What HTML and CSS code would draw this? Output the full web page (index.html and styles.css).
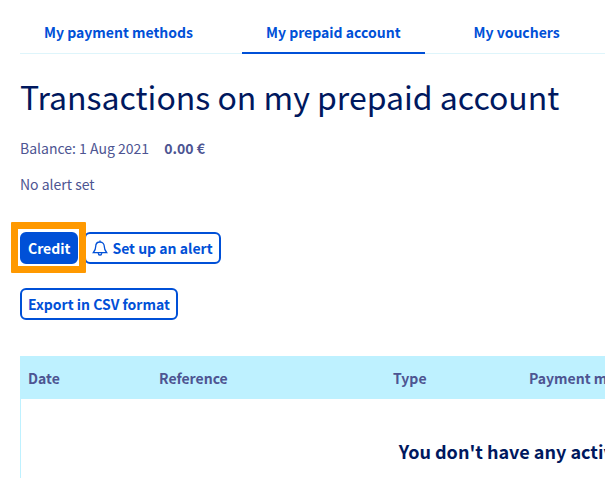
FILE: index.html
```html
<!DOCTYPE html>
<html lang="en">
<head>
<meta charset="utf-8">
<meta name="viewport" content="width=device-width, initial-scale=1">
<title>My prepaid account</title>
<link rel="stylesheet" href="styles.css">
</head>
<body>
<main class="page">
  <nav class="tabs" aria-label="Payment">
    <a class="tab" href="#methods">My payment methods</a>
    <a class="tab tab-active" href="#prepaid" aria-current="page">My prepaid account</a>
    <a class="tab" href="#vouchers">My vouchers</a>
  </nav>
  <h1 class="title">Transactions on my prepaid account</h1>
  <p class="info">Balance: 1 Aug 2021 <strong class="amount">0.00 €</strong></p>
  <p class="info">No alert set</p>
  <div class="actions">
    <span class="highlight"><button class="button button-primary" type="button">Credit</button></span>
    <button class="button" type="button">
      <svg class="bell" viewBox="0 0 16 16" aria-hidden="true">
        <path d="M8 .6V2M8 2C5.3 2 3.7 4 3.7 6.5C3.7 9.6 2.8 10.9 1.3 12.7H14.7C13.2 10.9 12.3 9.6 12.3 6.5C12.3 4 10.7 2 8 2Z"/>
        <path d="M6.2 13.2C6.4 14.6 7.1 15.2 8 15.2S9.6 14.6 9.8 13.2"/>
      </svg>
      Set up an alert
    </button>
  </div>
  <div class="actions">
    <button class="button" type="button">Export in CSV format</button>
  </div>
  <div class="table-wrap">
    <table class="table">
      <colgroup><col class="col-date"><col class="col-reference"><col class="col-type"><col></colgroup>
      <thead>
        <tr><th>Date</th><th>Reference</th><th>Type</th><th>Payment method</th></tr>
      </thead>
      <tbody>
        <tr><td class="empty" colspan="4">You don't have any activity</td></tr>
      </tbody>
    </table>
  </div>
</main>
</body>
</html>
```
FILE: styles.css
```css
* { box-sizing: border-box; }

body {
  margin: 0;
  overflow: hidden;
  background: #fff;
  color: #4d5592;
  font: 14px/24px "Noto Sans CJK SC", "Noto Sans", sans-serif;
}

.page { padding: 12px 0 0 20px; }

.tabs {
  display: flex;
  gap: 25px;
  margin-bottom: 18px;
  box-shadow: inset 0 -1px #def5fb;
}

.tab {
  padding: 8px 24px;
  border-bottom: 2px solid transparent;
  color: #0050d7;
  font-weight: 700;
  text-decoration: none;
}

.tab-active { border-bottom-color: #0050d7; }

.title {
  margin: 0 0 16px;
  color: #00185e;
  font-size: 32px;
  font-weight: 400;
  line-height: 48px;
}

.info { margin: 0 0 12px; }
.amount { margin-left: 12px; }

.actions {
  display: flex;
  gap: 6px;
  margin: 36px 0 24px;
}

.actions + .actions { margin: 0 0 36px; }

.button {
  display: flex;
  align-items: center;
  gap: 4px;
  height: 32px;
  padding: 0 6px;
  border: 2px solid #0050d7;
  border-radius: 6px;
  background: #fff;
  color: #0050d7;
  font: inherit;
  font-weight: 700;
  white-space: nowrap;
}

.button-primary { background: #0050d7; color: #fff; }

.bell {
  width: 16px;
  height: 16px;
  fill: none;
  stroke: currentColor;
  stroke-width: 1.3;
}

.highlight { position: relative; }

.highlight::after {
  content: "";
  position: absolute;
  inset: -10px -8px -9px -9px;
  border: 7px solid #ff9900;
  border-radius: 1px;
  pointer-events: none;
}

.table-wrap { overflow: hidden; }

.table {
  width: 996px;
  border: 1px solid #bef1ff;
  border-spacing: 0;
  table-layout: fixed;
}

.col-date { width: 131px; }
.col-reference { width: 234px; }
.col-type { width: 136px; }

.table th {
  padding: 9px 7px;
  background: #bef1ff;
  text-align: left;
}

.table .empty {
  padding: 40px 8px;
  color: #00185e;
  font-size: 18px;
  font-weight: 700;
  text-align: center;
}
```
